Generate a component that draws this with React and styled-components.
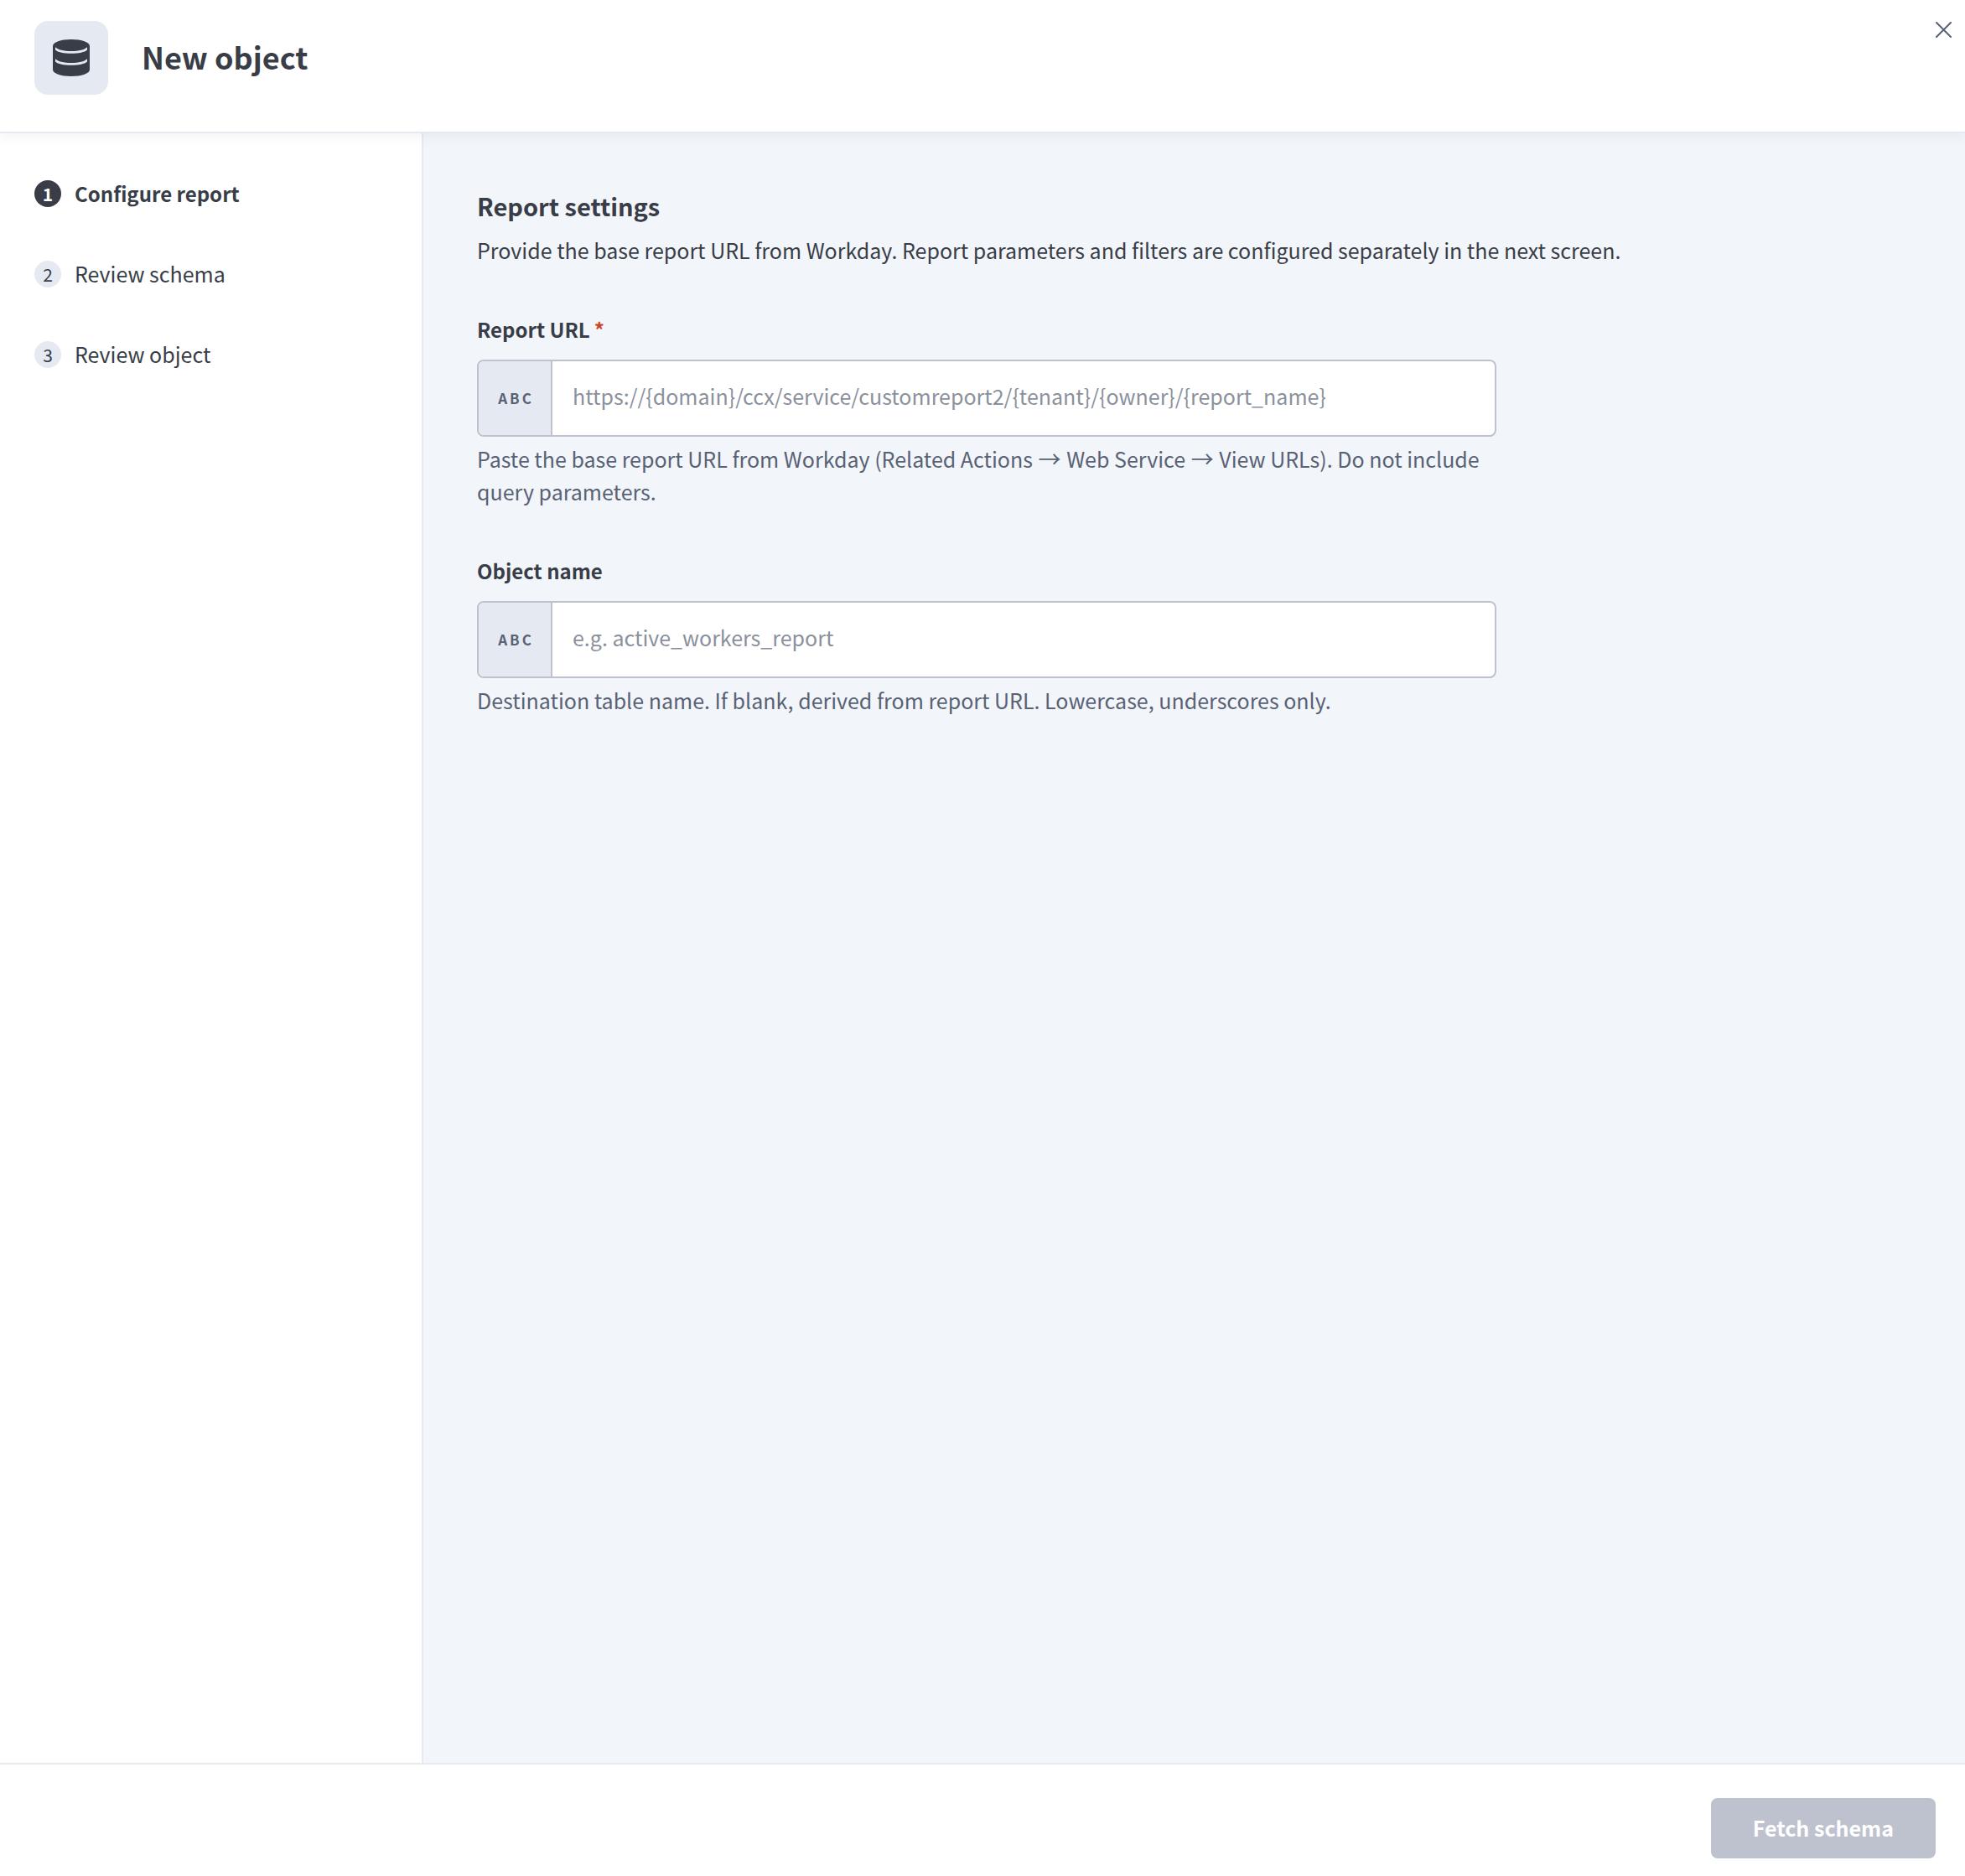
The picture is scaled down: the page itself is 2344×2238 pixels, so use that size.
import React, { useState } from "react";
import styled, { createGlobalStyle } from "styled-components";

const ink = "#383d47";
const muted = "#586274";
const line = "#e5e9f0";
const tint = "#e5eaf2";
const outline = "#bec2ce";

const GlobalStyle = createGlobalStyle`
  *, *::before, *::after { box-sizing: border-box; }
  body {
    margin: 0;
    background: #fff;
    color: ${ink};
    font-family: "Noto Sans CJK SC", "Noto Sans", sans-serif;
    font-size: 25px;
    line-height: 39px;
  }
  button, input { font: inherit; }
`;

const Page = styled.div`
  display: flex;
  flex-direction: column;
  min-height: 100vh;
`;

const Header = styled.header`
  position: relative;
  display: flex;
  justify-content: space-between;
  align-items: flex-start;
  background: #fff;
  border-bottom: 2px solid ${line};
  box-shadow: 0 4px 16px rgba(0, 0, 0, 0.05);
`;

const Brand = styled.div`
  display: flex;
  align-items: center;
  gap: 40px;
  padding: 25px 0 44px 41px;
`;

const IconTile = styled.span`
  display: grid;
  place-items: center;
  width: 88px;
  height: 88px;
  border-radius: 16px;
  background: ${tint};
`;

const Title = styled.h1`
  margin: 0;
  padding-bottom: 4px;
  font-size: 36px;
  line-height: 48px;
  font-weight: 700;
`;

const CloseButton = styled.button`
  display: grid;
  place-items: center;
  width: 39px;
  height: 39px;
  margin: 16px 6px;
  padding: 0;
  border: 0;
  background: none;
  color: ${muted};
  cursor: pointer;
`;

const Body = styled.div`
  display: flex;
  flex: 1;
`;

const Sidebar = styled.nav`
  flex: none;
  width: 505px;
  padding: 56px 41px;
  border-right: 2px solid ${line};
  background: #fff;
`;

const Steps = styled.ol`
  display: flex;
  flex-direction: column;
  gap: 64px;
  margin: 0;
  padding: 0;
  list-style: none;
`;

const Step = styled.li`
  display: flex;
  align-items: center;
  gap: 16px;
  height: 32px;
  font-size: ${(p) => (p.$active ? 24 : 25)}px;
  font-weight: ${(p) => (p.$active ? 600 : 400)};
`;

const StepName = styled.span`
  padding-bottom: 2px;
`;

const StepNumber = styled.span`
  width: 32px;
  height: 32px;
  border-radius: 50%;
  background: ${(p) => (p.$active ? ink : tint)};
  color: ${(p) => (p.$active ? "#fff" : ink)};
  font-size: 21px;
  line-height: 32px;
  font-weight: ${(p) => (p.$active ? 700 : 400)};
  text-align: center;
`;

const Main = styled.main`
  flex: 1;
  padding: 64px;
  background: #f2f5fa;
`;

const SectionTitle = styled.h2`
  margin: 0 0 12px;
  font-size: 29px;
  line-height: 44px;
  font-weight: 700;
`;

const Intro = styled.p`
  margin: 0;
`;

const Field = styled.div`
  max-width: 1216px;
  margin-top: 55px;
`;

const Label = styled.label`
  display: block;
  margin-bottom: 17px;
  font-size: 24px;
  font-weight: 600;
`;

const Required = styled.span`
  margin-left: 5px;
  color: #cc4422;
`;

const InputGroup = styled.div`
  display: flex;
  height: 92px;
  border: 2px solid ${outline};
  border-radius: 8px;
  background: #fff;
  overflow: hidden;
`;

const TypeTag = styled.span`
  display: grid;
  place-items: center;
  flex: none;
  width: 88px;
  padding: 0 0 2px 3px;
  border-right: 2px solid ${outline};
  background: ${tint};
  color: ${muted};
  font-size: 17px;
  font-weight: 700;
  letter-spacing: 3px;
`;

const Input = styled.input`
  flex: 1;
  min-width: 0;
  padding: 0 24px 6px;
  border: 0;
  outline: 0;
  background: none;
  color: ${ink};
  &::placeholder {
    color: #8a919c;
    opacity: 1;
  }
`;

const Help = styled.p`
  margin: 7px 0 0;
  color: ${muted};
`;

const Arrow = styled.span`
  margin: 0 1px;
  font-size: 27px;
  line-height: 0;
`;

const Footer = styled.footer`
  display: flex;
  justify-content: flex-end;
  padding: 40px 35px 21px;
  border-top: 2px solid ${line};
  background: #fff;
`;

const PrimaryButton = styled.button`
  height: 72px;
  padding: 0 50px 2px;
  border: 0;
  border-radius: 8px;
  background: ${outline};
  color: #fff;
  font-weight: 600;
`;

const steps = ["Configure report", "Review schema", "Review object"];

const fields = [
  {
    id: "report-url",
    label: "Report URL",
    required: true,
    placeholder: "https://{domain}/ccx/service/customreport2/{tenant}/{owner}/{report_name}",
    help: (
      <>
        Paste the base report URL from Workday (Related Actions <Arrow>→</Arrow> Web Service <Arrow>→</Arrow> View
        URLs). Do not include query parameters.
      </>
    ),
  },
  {
    id: "object-name",
    label: "Object name",
    required: false,
    placeholder: "e.g. active_workers_report",
    help: "Destination table name. If blank, derived from report URL. Lowercase, underscores only.",
  },
];

function DatabaseIcon() {
  return (
    <svg width="44" height="44" viewBox="0 0 44 44" aria-hidden="true">
      <path d="M0 8C0 3.4 9.5 0 22 0s22 3.4 22 8v28c0 4.6-9.5 8-22 8S0 40.6 0 36Z" fill={ink} />
      <path
        d="M3 9.3C6 12.5 13 14 22 14S38 12.5 41 9.3v3.2C38 15.4 31 16.7 22 16.7S6 15.4 3 12.5Z M3 23.3C6 26.5 13 28 22 28S38 26.5 41 23.3v3.2C38 29.4 31 30.7 22 30.7S6 29.4 3 26.5Z"
        fill={tint}
      />
    </svg>
  );
}

function CloseIcon() {
  return (
    <svg width="19" height="19" viewBox="0 0 19 19" aria-hidden="true">
      <path d="M1 1l17 17M18 1L1 18" stroke="currentColor" strokeWidth="2" strokeLinecap="round" fill="none" />
    </svg>
  );
}

function TextField({ id, label, required, placeholder, help }) {
  const [value, setValue] = useState("");
  return (
    <Field>
      <Label htmlFor={id}>
        {label}
        {required && <Required>*</Required>}
      </Label>
      <InputGroup>
        <TypeTag>ABC</TypeTag>
        <Input
          id={id}
          type="text"
          required={required}
          placeholder={placeholder}
          value={value}
          onChange={(e) => setValue(e.target.value)}
          aria-describedby={`${id}-help`}
        />
      </InputGroup>
      <Help id={`${id}-help`}>{help}</Help>
    </Field>
  );
}

export default function App() {
  return (
    <>
      <GlobalStyle />
      <Page>
        <Header>
          <Brand>
            <IconTile>
              <DatabaseIcon />
            </IconTile>
            <Title>New object</Title>
          </Brand>
          <CloseButton type="button" aria-label="Close">
            <CloseIcon />
          </CloseButton>
        </Header>
        <Body>
          <Sidebar aria-label="Steps">
            <Steps>
              {steps.map((name, i) => (
                <Step key={name} $active={i === 0} aria-current={i === 0 ? "step" : undefined}>
                  <StepNumber $active={i === 0}>{i + 1}</StepNumber>
                  <StepName>{name}</StepName>
                </Step>
              ))}
            </Steps>
          </Sidebar>
          <Main>
            <SectionTitle>Report settings</SectionTitle>
            <Intro>
              Provide the base report URL from Workday. Report parameters and filters are configured separately in the
              next screen.
            </Intro>
            {fields.map((f) => (
              <TextField key={f.id} {...f} />
            ))}
          </Main>
        </Body>
        <Footer>
          <PrimaryButton type="button" disabled>
            Fetch schema
          </PrimaryButton>
        </Footer>
      </Page>
    </>
  );
}
